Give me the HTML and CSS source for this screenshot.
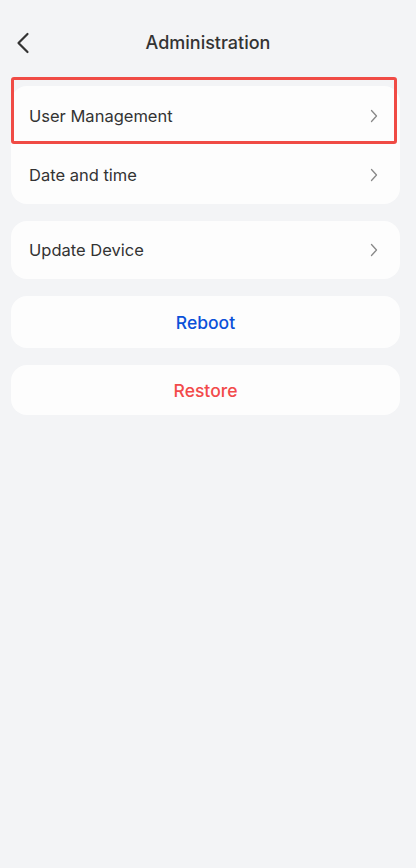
FILE: index.html
```html
<!DOCTYPE html>
<html lang="en">
<head>
    <meta charset="UTF-8">
    <meta name="viewport" content="width=device-width, initial-scale=1.0">
    <title>Administration</title>
    <link rel="stylesheet" href="styles.css">
</head>
<body>
    <header class="topbar">
        <button class="back" aria-label="Back">
            <svg width="14" height="22" viewBox="0 0 14 22"><path d="M11.5 2 L2.5 11 L11.5 20" fill="none" stroke="#333" stroke-width="2.2" stroke-linecap="round" stroke-linejoin="round"/></svg>
        </button>
        <h1>Administration</h1>
    </header>

    <main>
        <div class="card">
            <div class="row highlighted">
                <span>User Management</span>
                <svg class="chev" width="8" height="14" viewBox="0 0 8 14"><path d="M1.5 1.5 L6.5 7 L1.5 12.5" fill="none" stroke="#888" stroke-width="1.3" stroke-linecap="round" stroke-linejoin="round"/></svg>
                <div class="mark"></div>
            </div>
            <div class="row">
                <span>Date and time</span>
                <svg class="chev" width="8" height="14" viewBox="0 0 8 14"><path d="M1.5 1.5 L6.5 7 L1.5 12.5" fill="none" stroke="#888" stroke-width="1.3" stroke-linecap="round" stroke-linejoin="round"/></svg>
            </div>
        </div>

        <div class="card">
            <div class="row">
                <span>Update Device</span>
                <svg class="chev" width="8" height="14" viewBox="0 0 8 14"><path d="M1.5 1.5 L6.5 7 L1.5 12.5" fill="none" stroke="#888" stroke-width="1.3" stroke-linecap="round" stroke-linejoin="round"/></svg>
            </div>
        </div>

        <button class="action reboot">Reboot</button>
        <button class="action restore">Restore</button>
    </main>
</body>
</html>
```

FILE: styles.css
```css
body {
    font-family: Inter, "Noto Sans", sans-serif;
    margin: 0;
    padding: 0;
    background-color: #f3f4f6;
    color: #333;
    min-height: 868px;
}
.topbar {
    position: relative;
    height: 86px;
    display: flex;
    align-items: flex-start;
    justify-content: center;
}
.topbar h1 {
    margin: 0;
    padding-top: 32px;
    font-size: 18px;
    font-weight: 500;
    line-height: 22px;
    color: #333;
}
.back {
    position: absolute;
    left: 16px;
    top: 32px;
    background: none;
    border: none;
    padding: 0;
    cursor: pointer;
}
main {
    padding: 0 16px 0 11px;
    display: flex;
    flex-direction: column;
}
.card {
    background-color: #fdfdfd;
    border-radius: 16px;
    margin-bottom: 17px;
}
.row {
    position: relative;
    height: 59px;
    display: flex;
    align-items: center;
    justify-content: space-between;
    padding: 0 22px 0 18px;
    font-size: 16.5px;
}
.card .row:only-child {
    height: 58px;
}
.mark {
    position: absolute;
    left: 0;
    right: 3px;
    top: -9px;
    bottom: 1px;
    border: 3px solid #f04b45;
    border-radius: 3px;
    pointer-events: none;
}
.action {
    background-color: #fdfdfd;
    border: none;
    border-radius: 16px;
    height: 52px;
    font-family: inherit;
    font-size: 17.5px;
    font-weight: 500;
    margin-bottom: 17px;
    cursor: pointer;
}
.reboot {
    color: #0b50d9;
}
.restore {
    height: 50px;
    color: #f24a4a;
}
```
